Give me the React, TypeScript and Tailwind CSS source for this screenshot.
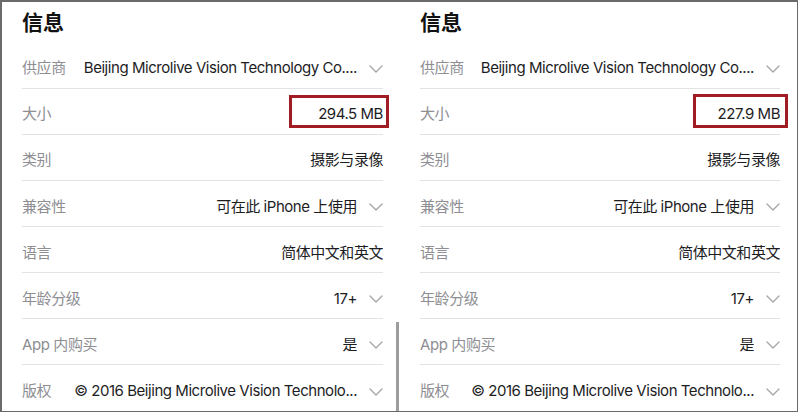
import React from "react";

const FONT = 'Inter, "Noto Sans CJK SC", sans-serif';

function Chevron() {
  return (
    <svg width="14" height="8" viewBox="0 0 14 8" className="shrink-0 ml-[12px]">
      <path d="M1 1 L7 7 L13 1" fill="none" stroke="#a4a4a8" strokeWidth="1.3" strokeLinecap="round" strokeLinejoin="round" />
    </svg>
  );
}

type RowProps = {
  label: string;
  value: string;
  chevron?: boolean;
  children?: React.ReactNode;
  last?: boolean;
};

function Row({ label, value, chevron, children, last }: RowProps) {
  return (
    <div
      className={
        "relative flex items-center h-[46.6px] pt-[7px] " +
        (last ? "" : "border-b border-[#e3e3e6]")
      }
    >
      <span className="text-[15px] tracking-[-0.4px] text-[#8e8e93] shrink-0 whitespace-nowrap">{label}</span>
      <div className="flex-1 min-w-0 flex items-center justify-end pl-[16px]">
        <span className="text-[15px] tracking-[-0.45px] text-[#1d1d1f] whitespace-nowrap overflow-hidden">{value}</span>
        {chevron && <Chevron />}
      </div>
      {children}
    </div>
  );
}

type PanelProps = {
  size: string;
  className: string;
  box: string;
};

function Panel({ size, className, box }: PanelProps) {
  return (
    <div className={"flex flex-col min-w-0 " + className}>
      <div className="h-[41px] pt-[8px]">
        <h2 className="text-[21px] leading-[26px] font-bold text-[#111]">信息</h2>
      </div>
      <Row label="供应商" value="Beijing Microlive Vision Technology Co...." chevron />
      <Row label="大小" value={size}>
        <div className={"absolute border-[3px] border-[#a11c23] " + box} />
      </Row>
      <Row label="类别" value="摄影与录像" />
      <Row label="兼容性" value="可在此 iPhone 上使用" chevron />
      <Row label="语言" value="简体中文和英文" />
      <Row label="年龄分级" value="17+" chevron />
      <Row label="App 内购买" value="是" chevron />
      <Row label="版权" value="© 2016 Beijing Microlive Vision Technolo..." chevron last />
    </div>
  );
}

export default function App() {
  return (
    <div className="w-[800px] h-[413px] bg-white overflow-hidden" style={{ fontFamily: FONT }}>
      <div className="relative w-[798px] h-[412px] flex border-l-2 border-t-2 border-r border-b border-[#6a6a6a] overflow-hidden">
        <Panel
          size="294.5 MB"
          className="w-[396px] shrink-0 pl-[20px] pr-[15px]"
          box="right-[-6px] top-[6px] w-[100px] h-[33px]"
        />
        <Panel
          size="227.9 MB"
          className="flex-1 pl-[22px] pr-[17px]"
          box="right-[-8px] top-[5px] w-[95px] h-[34px]"
        />
        <div className="absolute left-[394px] top-[320px] w-[3px] h-[100px] bg-[#9d9d9d]" />
      </div>
    </div>
  );
}
